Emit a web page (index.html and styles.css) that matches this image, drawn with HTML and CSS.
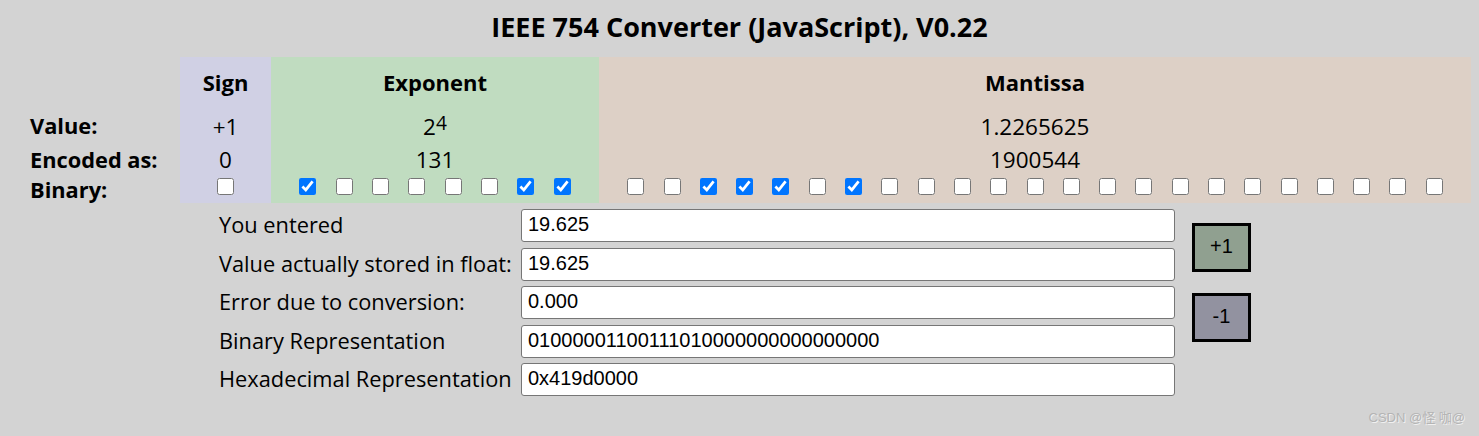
FILE: index.html
```html
<!DOCTYPE html>
<html>
<head>
<meta charset="utf-8">
<link rel="stylesheet" href="styles.css">
</head>
<body>
<h2 class="title">IEEE 754 Converter (JavaScript), V0.22</h2>
<div class="bits">
  <div class="cell lbl"></div>
  <div class="cell sign head">Sign</div>
  <div class="cell expo head">Exponent</div>
  <div class="cell mant head">Mantissa</div>

  <div class="cell lbl">Value:</div>
  <div class="cell sign val">+1</div>
  <div class="cell expo val">2<sup>4</sup></div>
  <div class="cell mant val">1.2265625</div>

  <div class="cell lbl">Encoded as:</div>
  <div class="cell sign val">0</div>
  <div class="cell expo val">131</div>
  <div class="cell mant val">1900544</div>

  <div class="cell lbl">Binary:</div>
  <div class="cell sign boxes"><input type="checkbox"></div>
  <div class="cell expo boxes">
    <input type="checkbox" checked><input type="checkbox"><input type="checkbox"><input type="checkbox"><input type="checkbox"><input type="checkbox"><input type="checkbox" checked><input type="checkbox" checked>
  </div>
  <div class="cell mant boxes">
    <input type="checkbox"><input type="checkbox"><input type="checkbox" checked><input type="checkbox" checked><input type="checkbox" checked><input type="checkbox"><input type="checkbox" checked><input type="checkbox"><input type="checkbox"><input type="checkbox"><input type="checkbox"><input type="checkbox"><input type="checkbox"><input type="checkbox"><input type="checkbox"><input type="checkbox"><input type="checkbox"><input type="checkbox"><input type="checkbox"><input type="checkbox"><input type="checkbox"><input type="checkbox"><input type="checkbox">
  </div>
</div>

<div class="form">
  <div class="flabel">You entered</div>
  <input class="field" type="text" value="19.625">
  <div class="btns">
    <button class="btn plus">+1</button>
    <button class="btn minus">-1</button>
  </div>
  <div class="flabel">Value actually stored in float:</div>
  <input class="field" type="text" value="19.625">
  <div class="flabel">Error due to conversion:</div>
  <input class="field" type="text" value="0.000">
  <div class="flabel">Binary Representation</div>
  <input class="field" type="text" value="01000001100111010000000000000000">
  <div class="flabel">Hexadecimal Representation</div>
  <input class="field" type="text" value="0x419d0000">
</div>

<div class="mark">CSDN @怪 咖@</div>
</body>
</html>
```
FILE: styles.css
```css
html, body {
  background: #d3d3d3;
}
body {
  margin: 8px;
  font-family: "Open Sans", "Noto Sans", sans-serif;
  color: #000;
  position: relative;
  height: 420px;
}
.title {
  margin: 0 0 11px 0;
  height: 38px;
  line-height: 38px;
  text-align: center;
  font-size: 27px;
  font-weight: 700;
}
.bits {
  display: grid;
  grid-template-columns: 172px 91px 328px 1fr;
  grid-template-rows: 52px 34px 33px 27px;
}
.cell {
  display: flex;
  align-items: center;
  justify-content: center;
}
.lbl {
  justify-content: flex-start;
  padding-left: 22px;
  font-weight: 700;
  font-size: 21.8px;
  padding-bottom: 1px;
}
.sign { background: #d0d0e4; }
.expo { background: #c0dcc0; }
.mant { background: #ddd0c6; }
.head {
  font-weight: 700;
  font-size: 22px;
  padding-bottom: 2px;
}
.val {
  font-size: 22.5px;
}
.val sup {
  font-size: 0.85em;
  position: relative;
  top: -3px;
}
.boxes {
  gap: 19.3px;
  align-items: flex-start;
  padding: 2px 0 0 0;
}
.boxes input {
  margin: 0;
  width: 17px;
  height: 17px;
}
.form {
  display: grid;
  grid-template-columns: 302px 654px 59px;
  grid-auto-rows: 33px;
  row-gap: 5.5px;
  margin: 6px 0 0 211px;
}
.flabel {
  grid-column: 1;
  font-size: 21.8px;
  display: flex;
  align-items: center;
  white-space: nowrap;
  padding-bottom: 2px;
}
.field {
  grid-column: 2;
  margin: 0;
  box-sizing: border-box;
  height: 33px;
  width: 654px;
  border: 1px solid #767676;
  border-radius: 3px;
  background: #fff;
  font-family: "Liberation Sans", Arial, sans-serif;
  font-size: 20px;
  padding: 0 6px 2px 6px;
  color: #000;
}
.btns {
  grid-column: 3;
  grid-row: 1 / span 4;
  display: flex;
  flex-direction: column;
  gap: 21px;
  padding-top: 14px;
  margin-left: 17px;
}
.btn {
  box-sizing: border-box;
  width: 59px;
  height: 49px;
  border: 3px solid #000;
  font-family: "Liberation Sans", Arial, sans-serif;
  font-size: 20px;
  color: #000;
  padding: 0 0 2px 0;
  margin: 0;
}
.plus { background: #90a090; }
.minus { background: #9292a0; }
.mark {
  position: absolute;
  right: 6px;
  bottom: 2px;
  font-family: "Liberation Sans", "Noto Sans CJK SC", sans-serif;
  font-size: 13px;
  color: #b4b4b4;
  text-shadow: 1px 1px 0 #f0f0f0;
}
```
